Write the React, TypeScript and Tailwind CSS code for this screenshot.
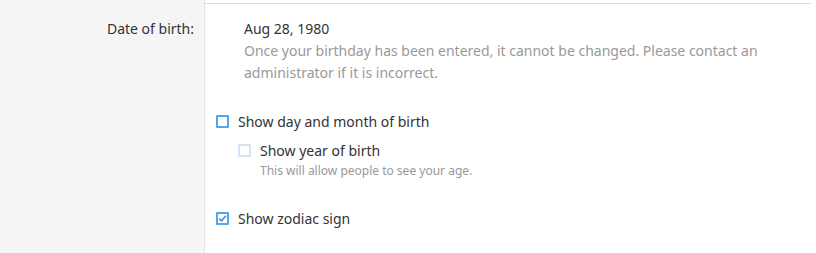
import React from 'react';

const font = { fontFamily: '"Noto Sans", "Open Sans", sans-serif' };

const Box = ({ checked, faded }: { checked?: boolean; faded?: boolean }) => (
  <span
    className={`w-[13px] h-[13px] shrink-0 border-2 rounded-[1px] flex items-center justify-center bg-white ${
      faded ? 'border-[#d3e6f8]' : 'border-[#55a5ea]'
    }`}
  >
    {checked && (
      <svg width="9" height="9" viewBox="0 0 9 9" fill="none">
        <path d="M1.2 4.6 L3.6 6.8 L7.9 1.8" stroke="#3d93e0" strokeWidth="1.6" />
      </svg>
    )}
  </span>
);

export default function App() {
  return (
    <div className="flex h-[253px] w-[816px] bg-white text-[14px]" style={font}>
      <div className="w-[205px] shrink-0 bg-[#f5f5f5] border-r border-[#e3e3e3] pt-[18px] pr-[10px] text-right text-[#333]">
        Date of birth:
      </div>
      <div className="flex-1 pr-[5px]">
        <div className="h-[3px]" />
        <div className="border-t border-[#dcdcdc] pt-[14px] pl-[39px] pr-[40px]">
          <div className="text-[#333] leading-[22px]">Aug 28, 1980</div>
          <div className="text-[#999] leading-[22px]">
            Once your birthday has been entered, it cannot be changed. Please contact an administrator if it is
            incorrect.
          </div>
        </div>
        <div className="pl-[11px] pt-[26px] text-[#333]">
          <label className="flex items-center gap-[9px] h-[22px]">
            <Box />
            <span>Show day and month of birth</span>
          </label>
          <div className="pl-[22px] pt-[7px]">
            <label className="flex items-center gap-[9px] h-[22px]">
              <Box faded />
              <span>Show year of birth</span>
            </label>
            <div className="pl-[22px] pt-[2px] text-[12px] text-[#999] leading-[16px]">
              This will allow people to see your age.
            </div>
          </div>
          <label className="flex items-center gap-[9px] h-[22px] mt-[28px]">
            <Box checked />
            <span>Show zodiac sign</span>
          </label>
        </div>
      </div>
    </div>
  );
}
